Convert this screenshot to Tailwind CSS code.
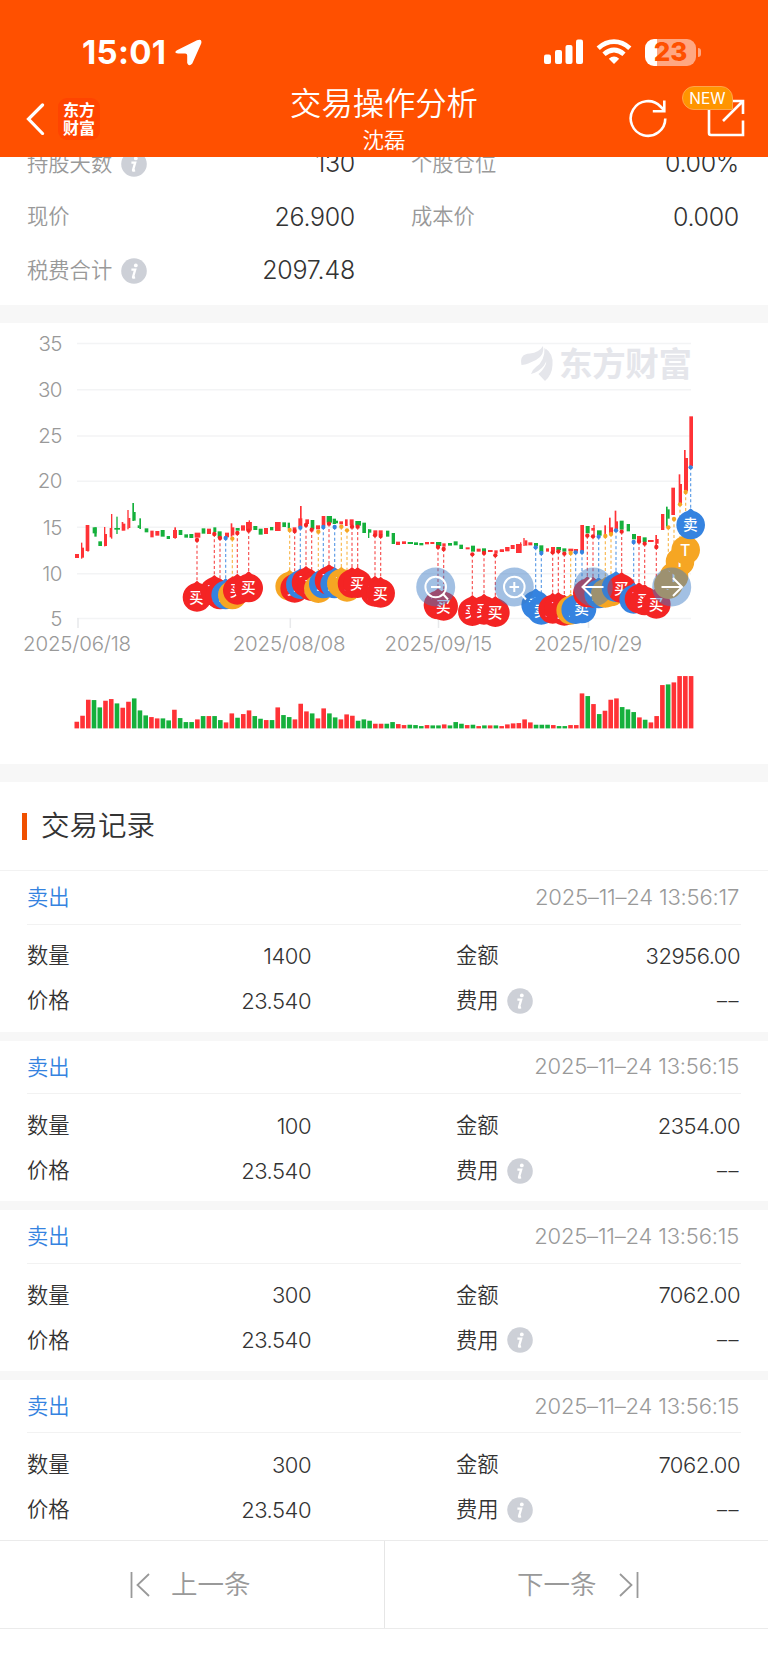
<!DOCTYPE html>
<html lang="zh-CN">
<head>
<meta charset="utf-8">
<title>交易操作分析</title>
<script src="https://cdn.jsdelivr.net/npm/@tailwindcss/browser@4"></script>
</head>
<body class="bg-white text-[#333] font-['Inter','Noto_Sans_CJK_SC',sans-serif] w-[768px] h-[1665px] overflow-hidden">
<svg class="hidden">
  <symbol id="info" viewBox="0 0 26 26"><circle cx="13" cy="13" r="12.8" fill="#cdd0d7"/><circle cx="14.8" cy="7.400" r="1.9" fill="#fff"/><path d="M10.400 11.6h3.800l-2.200 7.600q-.1.8 2-.1" fill="none" stroke="#fff" stroke-width="2.300"/></symbol>
</svg>

<header class="relative z-10 h-[157px] bg-[#ff5000] text-white">
  <div class="h-[81px] pl-[82px] pr-[67px] pt-[23px] flex items-center justify-between">
    <div class="flex items-center gap-[9px]">
      <span class="text-[33px] font-bold tracking-[0.3px] leading-none">15:01</span>
      <svg class="w-[27px] h-[27px]" viewBox="0 0 27 27"><path d="M2 11.200 22 1.200Q27.500-.8 26.200 4.400L17.300 24.500q-3.300 3.800-5.100-.5V16.600q0-2-2-2H3Q-1.800 13.800 2 11.200z" fill="#fff"/></svg>
    </div>
    <div class="flex items-center">
      <svg class="w-[40px] h-[26px]" viewBox="0 0 40 26" fill="#fff"><rect x="0" y="15.500" width="7" height="9.500" rx="2"/><rect x="11" y="11" width="7" height="14" rx="2"/><rect x="21.500" y="6" width="7" height="19" rx="2"/><rect x="32" y=".5" width="7" height="24.500" rx="2"/></svg>
      <svg class="w-[36px] h-[26px] ml-[12px]" viewBox="0 0 36 26" fill="none" stroke="#fff" stroke-width="4.800"><path d="M2.200 9.200Q9.500 2.600 18 2.600t15.800 6.600"/><path d="M8 15.200q4.800-4.200 10-4.200t10 4.200"/><path d="M18 25l-5.200-5.300q5.200-4.300 10.400 0z" fill="#fff" stroke="none"/></svg>
      <div class="ml-[13px] flex items-center gap-[2px]">
        <div class="w-[51px] h-[27px] rounded-[9px] bg-linear-to-r from-white from-24% to-[#ffa782] to-24% flex items-center justify-center text-[#ff5000] font-extrabold text-[26px] leading-none">23</div>
        <div class="w-[3px] h-[9px] rounded-r-full bg-[#ffa782]"></div>
      </div>
    </div>
  </div>
  <div class="h-[76px] flex px-[26px]">
    <div class="w-[224px] flex items-center">
      <svg class="w-[20px] h-[32px]" viewBox="0 0 20 32"><path d="M16.500 2 2.500 16 16.500 30.500" fill="none" stroke="#fff" stroke-width="3.200" stroke-linecap="round"/></svg>
      <div class="ml-[12px] w-[42px] h-[42px] rounded-[9px] bg-[#ff4400] text-[16px] font-bold leading-[18px] flex items-center justify-center text-center"><span>东方<br>财富</span></div>
    </div>
    <div class="flex-1 text-center font-[350]">
      <div class="text-[31.300px] leading-[46px]">交易操作分析</div>
      <div class="text-[21.500px] leading-[27px]">沈磊</div>
    </div>
    <div class="w-[224px] flex justify-end items-center gap-[40px] pb-[2px]">
      <svg class="w-[38px] h-[40px]" viewBox="0 0 38 40" fill="none" stroke="#fff" stroke-width="2.600"><path d="M36.300 20.500A17.300 17.300 0 1 1 31.500 8.500L35.500 12.500M35.300 2.500v10.800H23.800"/></svg>
      <div class="relative w-[38px] h-[38px] mr-[-3px]">
        <svg class="w-[38px] h-[38px]" viewBox="0 0 38 38" fill="none" stroke="#fff" stroke-width="2.600"><path d="M2 6v28q0 2 2 2h32V21.500M36 15V2H25M36 2 16 22"/></svg>
        <div class="absolute -left-[25px] -top-[13px] w-[51px] h-[24px] rounded-full rounded-br-[2px] bg-[#ff9500] border border-[#ffa44a] text-[15.500px] leading-[23px] text-center tracking-[0px]">NEW</div>
      </div>
    </div>
  </div>
</header>

<section class="-mt-[20px] h-[168px] grid grid-cols-[328px_328px] auto-rows-[53.600px] gap-x-[56px] pl-[27px] font-[350]">
  <div class="flex items-center"><span class="text-[21.300px] text-[#999]">持股天数</span><svg class="w-[26px] h-[26px] ml-[9px]"><use href="#info"/></svg><span class="ml-auto text-[25px] tracking-[-0.3px]">130</span></div>
  <div class="flex items-center"><span class="text-[21.300px] text-[#999]">个股仓位</span><span class="ml-auto text-[25px] tracking-[-0.3px]">0.00%</span></div>
  <div class="flex items-center"><span class="text-[21.300px] text-[#999]">现价</span><span class="ml-auto text-[25px] tracking-[-0.3px]">26.900</span></div>
  <div class="flex items-center"><span class="text-[21.300px] text-[#999]">成本价</span><span class="ml-auto text-[25px] tracking-[-0.3px]">0.000</span></div>
  <div class="flex items-center"><span class="text-[21.300px] text-[#999]">税费合计</span><svg class="w-[26px] h-[26px] ml-[9px]"><use href="#info"/></svg><span class="ml-auto text-[25px] tracking-[-0.2px]">2097.48</span></div>
</section>

<div class="h-[18px] bg-[#f7f7f7]"></div>
<svg class="block w-[768px] h-[441px]" viewBox="0 323 768 441">
  <g stroke="#f3f4f5" stroke-width="1.500"><path d="M77 343.500H691M77 389.700H691M77 436H691M77 481.200H691M77 527.300H691M77 573.700H691M77 618.500H691"/><path stroke="#e8e9eb" d="M78 618v10M290.300 618v10M438.500 618v10M588.500 618v10"/></g>
  <g fill="#e5e6eb"><path d="M521.500 365Q519 354 530 353.500q9-.8 13-7.500 2 9-7 14-10 4.500-11 4.500zM531 374q1-4 5-7 9-6 8.500-19.500 6 10-.5 18-5 6.500-13 8.500zM545 381l-6.500-7q8-7 8-14t-1-11.500q8 5 7 16.500-.5 10-7.500 16z"/>
  <text x="559" y="376" font-size="33.500" font-weight="700" textLength="133">东方财富</text></g>
  <g id="ylab" fill="#999" font-size="20.500" text-anchor="end" font-weight="350" letter-spacing="-.5"></g>
  <g id="xlab" fill="#999" font-size="20.500" text-anchor="middle" font-weight="350" letter-spacing="-.2"></g>
  <g id="vol"></g>
  <g id="c0" transform="translate(0 320) scale(.33333)"></g>
  <g id="c1" transform="translate(250 480) scale(.33333)"></g>
  <g id="c2" transform="translate(500 320) scale(.33333)"></g>
  <g fill="#3c7cc4" fill-opacity=".48"><circle cx="435.700" cy="587" r="19.500"/><circle cx="514.300" cy="587" r="19.500"/><circle cx="593.300" cy="587" r="19.500"/><circle cx="671.700" cy="587" r="19.500"/></g>
  <g fill="none" stroke="#fff" stroke-width="2"><circle cx="435.700" cy="587" r="10.300"/><path d="M431 587h9.500M443 594l5 5.500"/><circle cx="514.300" cy="587" r="10.300"/><path d="M509.500 587h9.600M514.300 582v10M521 594l5 5.500"/><path d="M603.500 587H583M591.500 578l-9 9 9 9M661.500 587H682M673 578l9 9-9 9"/></g>
</svg>

<div class="h-[18px] bg-[#f7f7f7]"></div>
<section>
  <div class="h-[89px] border-b border-[#f2f2f2] pl-[21.500px] flex items-center">
    <div class="w-[5.500px] h-[27px] bg-[#f05000]"></div>
    <h2 class="ml-[14px] mt-[1px] text-[28.500px] font-[350]">交易记录</h2>
  </div>
  <div id="records"></div>
</section>

<footer class="relative bg-white h-[89px] border-y border-[#ebebeb] grid grid-cols-[385px_383px] text-[#999] text-[26.500px] font-[350]">
  <div class="flex items-center border-r border-[#e6e6e6] pl-[130px]">
    <svg class="w-[20px] h-[26px]" viewBox="0 0 20 26" fill="none" stroke="#999" stroke-width="1.800"><path d="M1.500 0v26M19 2 7.500 13 19 24"/></svg><span class="ml-[21px]">上一条</span>
  </div>
  <div class="flex items-center pl-[132px]">
    <span>下一条</span><svg class="w-[20px] h-[26px] ml-[22px]" viewBox="0 0 20 26" fill="none" stroke="#999" stroke-width="1.800"><path d="M18.500 0v26M1 2l11.500 11L1 24"/></svg>
  </div>
</footer>

<script>
const RED = '#ff3236', GREEN = '#15b03c';
const el = id => document.getElementById(id);

const ys = [343.5, 389.7, 436, 481.2, 527.3, 573.7, 618.500];
el('ylab').innerHTML = ys.map((y, i) => `<text x="62" y="${y + 7.200}">${35 - i * 5}</text>`).join('');
el('xlab').innerHTML = [[77, '2025/06/18'], [289, '2025/08/08'], [438.300, '2025/09/15'], [588, '2025/10/29']]
  .map(([x, t]) => `<text x="${x}" y="650.500">${t}</text>`).join('');

const vol = 'R20 R38 R86 G85 G63 R83 R88 G75 R62 R80 G90 G54 G39 R34 R30 G30 G24 R56 G31 G19 G19 R27 G37 R37 G37 G25 R18 R45 G32 R43 R54 G37 G29 R25 G25 R63 G40 G34 R27 R74 R51 G45 R30 R60 G45 G33 R27 R42 R38 G23 G27 G23 R14 R14 G14 G19 R13 R10 G11 G10 G7 R10 G9 G9 R12 G9 G19 G14 R10 G11 R7 G9 R9 G9 R7 R12 R15 R16 R27 R18 G11 G11 G11 R10 G7 G7 R10 R10 R105 G97 R73 G43 R53 R86 R90 G64 G57 G49 R33 G26 R18 R37 R130 G132 R138 R157 R157 R157'.split(' ');
el('vol').innerHTML = vol.map((v, i) => {
  const h = v.slice(1) / 3;
  return `<rect x="${76.800 + i * 5.741 - 2.300}" y="${728.400 - h}" width="4.600" height="${h}" fill="${v[0] === 'R' ? RED : GREEN}"/>`;
}).join('');

const candles = [
 'R225,702,12,12 R243,668,4,48 R246,683,6,30 R257,615,11,78 R262,640,4,55 G278,622,12,18 G283,622,7,28 G295,664,11,14 R312,621,4,58 R312,642,9,36 R333,582,4,74 R329,624,6,28 G349,590,4,52 G343,624,17,5 R365,606,5,26 R368,611,8,21 R382,570,4,58 R385,594,6,30 G397,549,5,54 G400,576,7,26 G418,595,5,32 G413,616,6,8 G434,625,11,12 R451,632,10,20 R466,633,12,14 G482,630,12,20 G500,648,10,9 R523,622,5,34 R519,630,12,24 G536,630,11,15 G553,643,11,10 G568,642,12,12 R584,638,17,15 G605,625,11,16 R621,626,12,16 G640,622,9,14 G653,634,12,20 R675,638,12,14 R692,610,5,40 R695,622,8,24 G707,624,12,8 R723,616,12,16 R738,606,17,26 R746,601,4,8 G760,618,10,12',
 'R0,126,5,24 G12,138,10,12 G26,146,12,18 R42,144,12,18 G60,141,10,10 R75,126,17,27 G97,127,11,14 G113,128,7,18 R128,142,11,10 R150,78,5,60 R145,115,12,26 R166,118,11,14 G182,120,11,28 R198,136,12,12 R215,108,11,30 G230,108,16,20 G248,116,10,16 G258,122,6,8 R268,124,11,9 R285,118,8,20 R299,118,12,18 G316,123,17,14 G337,128,11,31 G354,148,4,26 G354,148,10,10 R370,151,12,14 R386,151,12,14 G408,152,10,18 G425,159,10,33 R438,185,12,10 R456,184,12,8 G473,186,16,6 G492,187,12,8 G508,189,12,7 R525,186,12,7 R541,186,12,6 G558,186,16,12 R577,190,10,10 G594,189,12,8 G611,184,12,12 G628,194,11,13 R647,202,12,6 G663,197,12,18 R680,206,12,9 G696,205,12,12 R714,210,14,6 R733,211,10,10 R749,209,12,6 R766,201,12,13',
 'R0,688,12,8 R16,681,12,12 R32,675,12,12 R48,672,17,27 R60,667,4,10 R70,654,4,24 R74,661,8,16 R85,667,12,9 G102,669,12,10 G118,676,12,20 R138,685,9,10 R153,681,12,14 G169,681,14,10 G187,685,12,10 R205,686,15,8 R222,687,12,8 R241,615,11,78 G257,618,12,22 R280,615,4,30 R274,624,10,8 G291,631,14,16 R313,616,5,28 R327,593,5,46 R329,622,10,18 R344,572,5,56 R347,604,7,24 G359,602,12,27 G380,612,10,22 G396,642,12,16 R411,648,12,16 G428,652,12,14 R444,660,17,6 R466,645,5,34 R467,657,9,14 R483,582,10,48 G498,560,5,60 G502,568,7,28 R514,503,11,82 R536,463,5,90 R539,492,7,60 R552,390,5,120 R554,414,10,100 R568,289,11,150'
];
/* colour, x, price dot y, marker centre y */
const pins = [
 'R591,660,832 R643,642,815 R660,654,825 B677,654,825 O697,656,825 R712,639,811 R746,632,804',
 'O119,150,319 R134,153,325 B151,143,314 R168,135,308 R185,149,320 O205,155,326 B220,141,312 R237,131,302 B254,141,312 O274,140,310 O291,151,322 R306,140,311 R323,140,311 R375,166,337 R392,168,340 R564,201,375 R581,207,379 R667,223,395 R702,219,391 R736,226,398',
 'B107,682,855 B124,699,871 R158,697,868 R175,694,866 R193,701,874 O212,699,871 B227,697,869 B246,696,867 R262,647,819 R279,649,820 B296,650,822 O316,648,820 O333,642,816 B348,631,803 R365,635,806 B401,666,838 R417,665,837 R434,671,843 R469,681,853 O505,622,794 O522,597,769 O540,553,725 O557,516,690 B572,442,615'
];
const pinColor = {R: '#f42424', B: '#3583e0', O: '#f6a623'};
const pinText = {R: '买', B: '卖', O: 'T'};
const parse = s => s.split(' ').map(t => [t[0], ...t.slice(1).split(',').map(Number)]);
[0, 1, 2].forEach(k => {
  let s = parse(candles[k]).map(([c, x, y, w, h]) => `<rect x="${x}" y="${y}" width="${w}" height="${h}" fill="${c === 'R' ? RED : GREEN}"/>`).join('');
  const p = parse(pins[k]);
  s += p.map(([c, x, d, m]) => `<path d="M${x} ${d}V${m - 45}" stroke="${pinColor[c]}" stroke-width="3.500" stroke-dasharray="9 7" stroke-opacity=".8"/><circle cx="${x}" cy="${d}" r="6.500" fill="${pinColor[c]}"/>`).join('');
  s += p.map(([c, x, d, m]) => `<path d="M${x} ${m - 50}Q${x + 8} ${m - 41} ${x + 18} ${m - 39}A43 43 0 1 1 ${x - 18} ${m - 39}Q${x - 8} ${m - 41} ${x} ${m - 50}z" fill="${pinColor[c]}"/><text x="${x - 1}" y="${m + (c === 'O' ? 17 : 16)}" font-size="${c === 'O' ? 48 : 44}" font-weight="500" text-anchor="middle" fill="#fff">${pinText[c]}</text>`).join('');
  el('c' + k).innerHTML = s;
});

const rows = [['17', '1400', '32956.00'], ['15', '100', '2354.00'], ['15', '300', '7062.00'], ['15', '300', '7062.00']];
el('records').innerHTML = rows.map(([sec, qty, amt], i) => `
  <article class="h-[160.600px] px-[27px] text-[21.300px] font-[350]">
    <div class="h-[53.500px] border-b border-[#f2f2f2] flex items-center justify-between"><span class="text-[#3583e0] mt-[2px]">卖出</span><span class="text-[#999] text-[22px] tracking-[-0.2px] mr-[2px]">2025–11–24 13:56:${sec}</span></div>
    <div class="pt-[9px] grid grid-cols-[284px_284px] gap-x-[145px] auto-rows-[45px] leading-none">
      <div class="flex items-center justify-between"><span>数量</span><span class="text-[22px] tracking-[-0.5px]">${qty}</span></div>
      <div class="flex items-center justify-between"><span>金额</span><span class="text-[22px] tracking-[-0.5px]">${amt}</span></div>
      <div class="flex items-center justify-between"><span>价格</span><span class="text-[22px] tracking-[-0.5px]">23.540</span></div>
      <div class="flex items-center"><span>费用</span><svg class="w-[26px] h-[26px] ml-[8px]"><use href="#info"/></svg><span class="text-[20px] tracking-[1.500px] ml-auto">––</span></div>
    </div>
  </article>${i < 3 ? '<div class="h-[9px] bg-[#f7f7f7]"></div>' : ''}`).join('');
</script>
</body>
</html>
